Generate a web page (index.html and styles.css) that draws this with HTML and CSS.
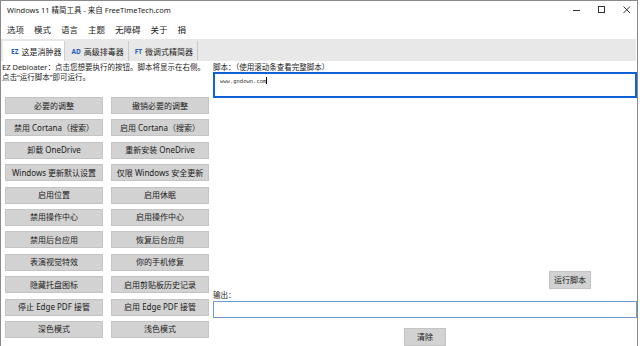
FILE: index.html
```html
<!DOCTYPE html>
<html lang="zh">
<head>
    <meta charset="UTF-8">
    <meta name="viewport" content="width=device-width, initial-scale=1.0">
    <title>Windows 11 精简工具</title>
    <link rel="stylesheet" href="styles.css">
</head>
<body>
    <div class="window">
        <div class="titlebar">
            <span class="title">Windows 11 精简工具 - 来自 FreeTimeTech.com</span>
            <div class="controls">
                <svg width="8" height="8" viewBox="0 0 8 8"><line x1="0" y1="4.5" x2="7" y2="4.5" stroke="#333" stroke-width="1"/></svg>
                <svg width="8" height="8" viewBox="0 0 8 8"><rect x="0.5" y="0.5" width="6" height="6" fill="none" stroke="#333" stroke-width="1"/></svg>
                <svg width="8" height="8" viewBox="0 0 8 8"><path d="M0.5 0.5 L7 7 M7 0.5 L0.5 7" stroke="#333" stroke-width="1"/></svg>
            </div>
        </div>

        <div class="menubar">
            <span>选项</span>
            <span>模式</span>
            <span>语言</span>
            <span>主题</span>
            <span>无障碍</span>
            <span>关于</span>
            <span>捐</span>
        </div>

        <div class="tabs">
            <div class="tab active"><b>EZ</b> 这是消肿器</div>
            <div class="tab"><b>AD</b> 高级排毒器</div>
            <div class="tab"><b>FT</b> 微调式精简器</div>
        </div>

        <div class="main">
            <div class="left">
                <p class="desc">EZ Debloater：点击您想要执行的按钮。脚本将显示在右侧。<br>点击“运行脚本”即可运行。</p>
                <div class="grid">
                    <button>必要的调整</button>
                    <button>撤销必要的调整</button>
                    <button>禁用 Cortana（搜索）</button>
                    <button>启用 Cortana（搜索）</button>
                    <button>卸载 OneDrive</button>
                    <button>重新安装 OneDrive</button>
                    <button>Windows 更新默认设置</button>
                    <button>仅限 Windows 安全更新</button>
                    <button>启用位置</button>
                    <button>启用休眠</button>
                    <button>禁用操作中心</button>
                    <button>启用操作中心</button>
                    <button>禁用后台应用</button>
                    <button>恢复后台应用</button>
                    <button>表演视觉特效</button>
                    <button>你的手机修复</button>
                    <button>隐藏托盘图标</button>
                    <button>启用剪贴板历史记录</button>
                    <button>停止 Edge PDF 接管</button>
                    <button>启用 Edge PDF 接管</button>
                    <button>深色模式</button>
                    <button>浅色模式</button>
                </div>
            </div>

            <div class="right">
                <div class="label">脚本：（使用滚动条查看完整脚本）</div>
                <div class="script">www.gndown.com<span class="caret"></span></div>
                <button class="run">运行脚本</button>
                <div class="label">输出：</div>
                <div class="output"></div>
                <button class="clear">清除</button>
            </div>
        </div>
    </div>
</body>
</html>
```

FILE: styles.css
```css
* {
    box-sizing: border-box;
}

body {
    margin: 0;
    width: 640px;
    height: 346px;
    overflow: hidden;
    background: #ffffff;
    font-family: "Noto Sans", "Noto Sans CJK SC", sans-serif;
    color: #1a1a1a;
}

.window {
    width: 638px;
    height: 346px;
    border: 1px solid #8a8a8a;
    border-bottom: none;
    display: flex;
    flex-direction: column;
    background: #ffffff;
}

.titlebar {
    height: 17px;
    display: flex;
    align-items: center;
    padding-left: 6px;
    font-size: 7.5px;
}

.controls {
    margin-left: auto;
    display: flex;
    gap: 17px;
    margin-right: 6px;
}

.menubar {
    height: 21px;
    display: flex;
    align-items: center;
    gap: 10px;
    padding-left: 6px;
    font-size: 8.5px;
}

.tabs {
    height: 22px;
    background: #e8e8e8;
    display: flex;
    align-items: flex-end;
    margin-right: 1px;
    padding-left: 2px;
}

.tab {
    height: 20px;
    display: flex;
    align-items: center;
    gap: 3px;
    padding: 0 4px 0 6px;
    font-size: 8px;
    white-space: nowrap;
    border-right: 1px solid #c8c8c8;
}

.tab.active {
    background: #ffffff;
    border-right: 1px solid #d0d0d0;
    padding: 0 3px 0 8px;
}

.tab b {
    color: #1f5fbf;
    font-size: 6.5px;
    font-weight: 700;
}

.main {
    flex: 1;
    min-height: 0;
    display: flex;
    overflow: hidden;
}

.left {
    width: 212px;
    padding-left: 1px;
}

.desc {
    margin: 0;
    font-size: 7.5px;
    line-height: 10px;
    padding-top: 1px;
}

.grid {
    margin: 15px 0 0 3px;
    display: grid;
    grid-template-columns: 98px 98px;
    grid-auto-rows: 17px;
    column-gap: 8px;
    row-gap: 5.4px;
}

button {
    font-family: "Noto Sans", "Noto Sans CJK SC", sans-serif;
    font-size: 8px;
    color: #1a1a1a;
    background: #d2d2d2;
    border: 1px solid #c4c4c4;
    padding: 0;
    margin: 0;
    line-height: 1;
    white-space: nowrap;
}

.right {
    flex: 1;
    display: flex;
    flex-direction: column;
}

.label {
    font-size: 7.5px;
    line-height: 10px;
    height: 11px;
    padding-top: 1px;
}

.script {
    height: 26px;
    border: 2px solid #1062d4;
    padding: 3px 5px;
    font-family: "DejaVu Sans Mono", monospace;
    font-size: 5.5px;
    line-height: 8px;
    color: #333;
}

.caret {
    display: inline-block;
    width: 1px;
    height: 7px;
    background: #000;
    vertical-align: -1px;
}

.run {
    margin-top: auto;
    align-self: flex-end;
    margin-right: 46px;
    width: 42px;
    height: 18px;
}

.output {
    height: 17px;
    border: 1px solid #6e9ccf;
    margin-top: 1px;
}

.clear {
    align-self: center;
    margin-top: 10px;
    width: 42px;
    height: 18px;
    flex-shrink: 0;
}
```
